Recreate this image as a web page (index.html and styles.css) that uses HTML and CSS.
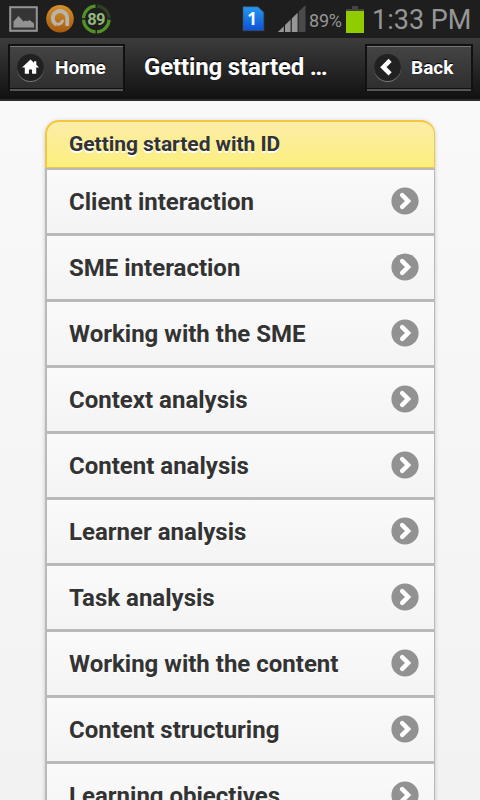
FILE: index.html
```html
<!DOCTYPE html>
<html lang="en">
<head>
<meta charset="utf-8">
<title>Getting started with ID</title>
<link rel="stylesheet" href="styles.css">
</head>
<body>
<svg class="defs" aria-hidden="true">
  <symbol id="arrow" viewBox="0 0 28 28"><circle cx="14" cy="14" r="13.6" fill="#929292"/><path d="M11.2 8.2l5.9 5.8-5.9 5.8" fill="none" stroke="#fff" stroke-width="4.5" stroke-linecap="round"/></symbol>
</svg>
<div class="status">
  <svg class="tray" viewBox="0 0 120 38">
    <rect x="10.2" y="7.2" width="26.6" height="23.6" fill="#353535" stroke="#959595" stroke-width="2"/>
    <path d="M13.5 27.5v-6l5-5.5 5 5.5 2-1 2 .8 2-1.2 4.5 3.5v3.9z" fill="#929292"/>
    <defs><linearGradient id="orange" x2="0" y2="1"><stop stop-color="#d5902a"/><stop offset="1" stop-color="#a65a0d"/></linearGradient></defs>
    <circle cx="60" cy="18.8" r="13.8" fill="url(#orange)"/>
    <path d="M56.5 24.6A7.2 7.2 0 1 1 67.2 18v8" fill="none" stroke="#b9b5ae" stroke-width="3.8"/>
    <path d="M56.5 24.4c3.5 0 6.2-1.6 6.2-4.6" fill="none" stroke="#b9b5ae" stroke-width="3"/>
    <circle cx="96.3" cy="19" r="12.8" fill="none" stroke="#2d4222" stroke-width="3.2"/>
    <path d="M109.1 19A12.8 12.8 0 1 1 96.3 6.2" fill="none" stroke="#539128" stroke-width="3.2"/>
    <path d="M96.3 3v5M96.3 30v5M80 19h5M108 19h5" stroke="#1e1e1e" stroke-width="1.5"/>
    <text x="96" y="25" class="ring-text">89</text>
  </svg>
  <svg class="sim" viewBox="0 0 24 26">
    <defs><linearGradient id="blue" x2="0" y2="1"><stop stop-color="#2599ee"/><stop offset="1" stop-color="#0c52d6"/></linearGradient></defs>
    <path d="M1 .7h14.8l6 5.5v18.5H1z" fill="url(#blue)" stroke="#454b50" stroke-width=".7"/>
    <text x="10.2" y="19" class="sim-text">1</text>
  </svg>
  <svg class="signal" viewBox="0 0 30 28">
    <path d="M1 27L28.5 0v27z" fill="#4a4a4a"/>
    <path d="M1 27l20.5-20v20z" fill="#969696"/>
    <path d="M7.4 0v27M14.2 0v27M21.2 0v27" stroke="#1e1e1e" stroke-width="1.2"/>
  </svg>
  <span class="percent">89%</span>
  <svg class="battery" viewBox="0 0 18 27"><path d="M6 0h6v3h6v2H0V3h6z" fill="#444"/><path d="M0 5h18v22H0z" fill="#91cc00"/></svg>
  <span class="clock">1:33 PM</span>
</div>
<header class="bar">
  <a class="button home"><span class="disc"><svg viewBox="0 0 26 26"><path d="M13 5.2L4.8 12.9h2.7V19h4v-4.1h3V19h4v-6.1h2.7l-2.6-2.5V7h-2.2v1.4z" fill="#fff"/></svg></span><span class="label">Home</span></a>
  <h1>Getting started …</h1>
  <a class="button back"><span class="disc"><svg viewBox="0 0 26 26"><path d="M15.5 6.2L9 12.7l6.5 6.5" fill="none" stroke="#fff" stroke-width="4.3"/></svg></span><span class="label">Back</span></a>
</header>
<main>
  <ul class="list">
    <li class="heading"><span>Getting started with ID</span></li>
    <li class="row"><span>Client interaction</span><svg><use href="#arrow"/></svg></li>
    <li class="row"><span>SME interaction</span><svg><use href="#arrow"/></svg></li>
    <li class="row"><span>Working with the SME</span><svg><use href="#arrow"/></svg></li>
    <li class="row"><span>Context analysis</span><svg><use href="#arrow"/></svg></li>
    <li class="row"><span>Content analysis</span><svg><use href="#arrow"/></svg></li>
    <li class="row"><span>Learner analysis</span><svg><use href="#arrow"/></svg></li>
    <li class="row"><span>Task analysis</span><svg><use href="#arrow"/></svg></li>
    <li class="row"><span>Working with the content</span><svg><use href="#arrow"/></svg></li>
    <li class="row"><span>Content structuring</span><svg><use href="#arrow"/></svg></li>
    <li class="row"><span>Learning objectives</span><svg><use href="#arrow"/></svg></li>
  </ul>
</main>
</body>
</html>
```
FILE: styles.css
```css
* { box-sizing: border-box; }
body {
  margin: 0;
  height: 800px;
  overflow: hidden;
  display: flex;
  flex-direction: column;
  background: #f5f5f5;
  font-family: Roboto, sans-serif;
  color: #333;
}
.defs { position: absolute; width: 0; height: 0; }
.status {
  flex: none;
  height: 38px;
  display: flex;
  align-items: center;
  background: #1e1e1e;
  color: #969696;
  white-space: nowrap;
}
.tray { width: 120px; height: 38px; }
.ring-text { font: 700 16.5px Roboto, sans-serif; letter-spacing: -.8px; fill: #93b57c; text-anchor: middle; }
.sim { width: 24px; height: 26px; margin-left: 122px; }
.sim-text { font: 700 17px "Noto Sans", sans-serif; fill: #f4f8ff; text-anchor: middle; }
.signal { width: 30px; height: 28px; margin: 0 0 1px 11px; }
.percent { width: 38px; margin: 2px 0 0 2px; font-size: 18px; letter-spacing: -.2px; }
.battery { width: 18px; height: 27px; margin-left: -1px; }
.clock { margin: 1px 0 0 8px; font-size: 27px; }
.bar {
  flex: none;
  height: 63px;
  display: flex;
  align-items: flex-start;
  padding: 6px 7px 0 8px;
  background: linear-gradient(#3c3c3c, #111);
  border-bottom: 2px solid #2a2a2a;
  color: #fff;
  text-shadow: 0 -1px 1px #000;
}
.button {
  height: 47px;
  display: flex;
  align-items: center;
  border: 2px solid #111;
  border-bottom: 0;
  background: linear-gradient(#444, #2d2d2d);
  box-shadow: inset 0 1px #777, inset 0 -2px #555, inset 0 -3px #111;
  font-size: 19px;
  font-weight: 700;
}
.home { width: 117px; padding-left: 7px; }
.back { width: 108px; padding-left: 7px; }
.disc {
  width: 27px;
  height: 27px;
  margin: 0 11px 3px 0;
  border-radius: 50%;
  background: #212121;
  box-shadow: 0 1px #777;
}
.back .disc { margin-right: 10px; }
.label { margin-bottom: 2px; }
.disc svg { display: block; width: 27px; height: 27px; }
h1 {
  flex: 1;
  margin: 8px 0 0 19px;
  font-size: 24px;
  line-height: 30px;
  font-weight: 700;
  letter-spacing: -.15px;
  white-space: nowrap;
}
main {
  flex: 1;
  min-height: 0;
  padding: 19px 45px 0;
  background: linear-gradient(#f9f9f9, #f2f2f2);
}
.list {
  list-style: none;
  margin: 0;
  padding: 0;
  border-radius: 14px 14px 0 0;
  box-shadow: 0 1px 4px rgba(0, 0, 0, .2);
}
.heading {
  height: 48px;
  padding: 0 22px;
  border: 2px solid #f5c63f;
  border-width: 2px 1px 1px 2px;
  border-radius: 14px 14px 0 0;
  background: linear-gradient(#fceda7, #fbef7e);
  font-size: 21px;
  line-height: 44px;
  font-weight: 700;
  letter-spacing: -.04px;
  text-shadow: 0 2px #fff;
}
.row {
  height: 66px;
  display: flex;
  align-items: center;
  justify-content: space-between;
  padding: 0 15px 0 22px;
  border: solid #b9b9b9;
  border-width: 0 1px 3px 2px;
  background: linear-gradient(#fafafa, #f4f4f4);
  font-size: 24px;
  font-weight: 700;
  text-shadow: 0 1px #fff;
}
.heading + .row { height: 68px; border-top-width: 2px; }
.row svg { width: 28px; height: 28px; margin-bottom: 2px; }
```
